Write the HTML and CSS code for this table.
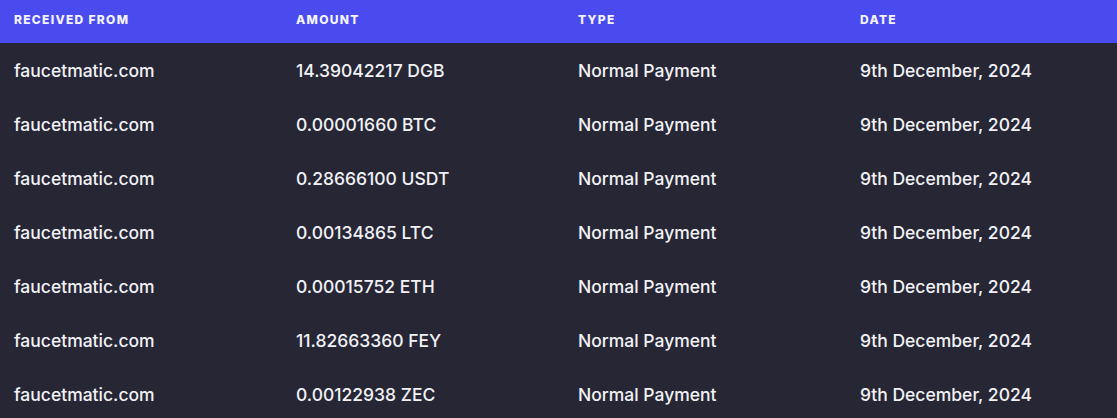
FILE: index.html
```html
<!DOCTYPE html>
<html>
<head>
<meta charset="utf-8">
<link rel="stylesheet" href="styles.css">
</head>
<body>
<table class="tx">
  <thead>
    <tr><th>Received From</th><th>Amount</th><th>Type</th><th>Date</th></tr>
  </thead>
  <tbody>
    <tr><td>faucetmatic.com</td><td>14.39042217 DGB</td><td>Normal Payment</td><td>9th December, 2024</td></tr>
    <tr><td>faucetmatic.com</td><td>0.00001660 BTC</td><td>Normal Payment</td><td>9th December, 2024</td></tr>
    <tr><td>faucetmatic.com</td><td>0.28666100 USDT</td><td>Normal Payment</td><td>9th December, 2024</td></tr>
    <tr><td>faucetmatic.com</td><td>0.00134865 LTC</td><td>Normal Payment</td><td>9th December, 2024</td></tr>
    <tr><td>faucetmatic.com</td><td>0.00015752 ETH</td><td>Normal Payment</td><td>9th December, 2024</td></tr>
    <tr><td>faucetmatic.com</td><td>11.82663360 FEY</td><td>Normal Payment</td><td>9th December, 2024</td></tr>
    <tr><td>faucetmatic.com</td><td>0.00122938 ZEC</td><td>Normal Payment</td><td>9th December, 2024</td></tr>
  </tbody>
</table>
</body>
</html>
```
FILE: styles.css
```css
html, body {
  margin: 0;
  padding: 0;
  background: #262635;
  overflow: hidden;
}
.tx {
  border-collapse: collapse;
  table-layout: fixed;
  width: 1128px;
  font-family: Inter, "Noto Sans", sans-serif;
  color: #f2f2f6;
}
.tx th {
  background: #4a4bef;
  height: 43px;
  padding: 0 0 4px 14px;
  box-sizing: border-box;
  text-align: left;
  font-size: 12px;
  font-weight: 800;
  letter-spacing: 1.3px;
  text-transform: uppercase;
  color: #f4f4ff;
  width: 282px;
}
.tx td {
  height: 54px;
  padding: 0 0 0 14px;
  box-sizing: border-box;
  font-size: 17.5px;
  font-weight: 500;
  vertical-align: middle;
}
```
